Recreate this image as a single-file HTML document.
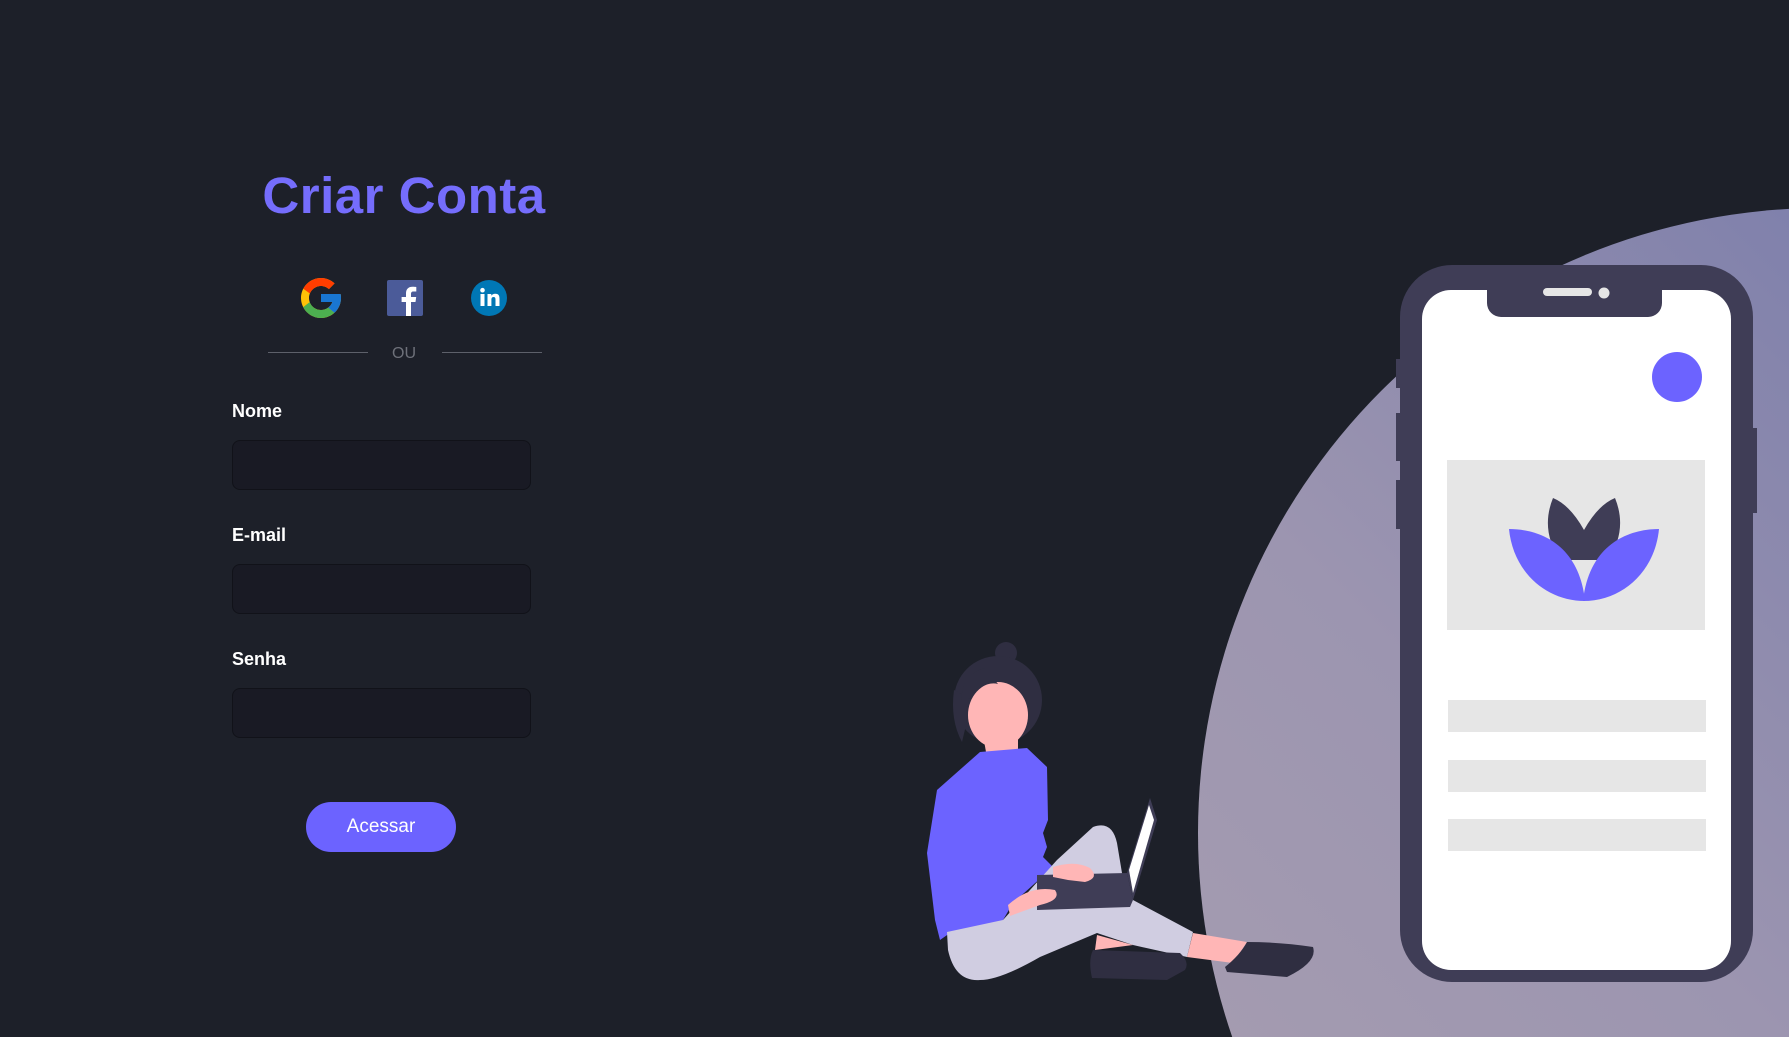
<!DOCTYPE html>
<html><head><meta charset="utf-8"><style>
*{margin:0;padding:0;box-sizing:border-box}
html,body{width:1789px;height:1037px;overflow:hidden}
body{background:#1d2029;position:relative;font-family:"Liberation Sans",sans-serif}
.abs{position:absolute}
h1{position:absolute;left:258px;top:166px;width:292px;text-align:center;font-size:51px;font-weight:bold;color:#756dfc;letter-spacing:0.5px;line-height:60px}
.lbl{position:absolute;left:232px;font-size:18px;font-weight:bold;color:#fff}
.inp{position:absolute;left:232px;width:299px;height:50px;background:#191a24;border:1px solid #111219;border-radius:8px}
.btn{position:absolute;left:306px;top:802px;width:150px;height:50px;border-radius:25px;background:#6c63ff;color:#fff;font-size:19px;text-align:center;line-height:50px}
.line{position:absolute;top:352px;height:1px;background:#5d606a;width:100px}
</style></head><body>
<h1>Criar Conta</h1>
<svg class="abs" style="left:301px;top:278px" width="40" height="40" viewBox="4 4 40 40">
<path fill="#FFC107" d="M43.6 20H24v8h11.3C33.7 32.7 29.2 36 24 36c-6.6 0-12-5.4-12-12s5.4-12 12-12c3.1 0 5.8 1.2 7.9 3.1l5.7-5.7C34 6.1 29.3 4 24 4 13 4 4 13 4 24s9 20 20 20 20-9 20-20c0-1.3-.1-2.7-.4-4z"/>
<path fill="#FF3D00" d="M6.3 14.7l6.6 4.8C14.7 15.1 19 12 24 12c3.1 0 5.8 1.2 7.9 3.1l5.7-5.7C34 6.1 29.3 4 24 4 16.3 4 9.7 8.3 6.3 14.7z"/>
<path fill="#4CAF50" d="M24 44c5.2 0 9.9-2 13.4-5.2l-6.2-5.2C29.2 35.1 26.7 36 24 36c-5.2 0-9.6-3.3-11.3-7.9l-6.5 5C9.5 39.6 16.2 44 24 44z"/>
<path fill="#1976D2" d="M43.6 20H24v8h11.3c-.8 2.2-2.2 4.2-4.1 5.6l6.2 5.2C37 39.2 44 34 44 24c0-1.3-.1-2.7-.4-4z"/>
</svg>
<svg class="abs" style="left:387px;top:280px" width="36" height="36" viewBox="0 0 36 36">
<rect width="36" height="36" rx="2" fill="#4b5b99"/>
<path d="M24 36V22h4.5l.7-5H24v-3c0-1.5.5-2.5 2.6-2.5h2.7V7c-.5-.1-2-.2-3.9-.2-3.9 0-6.4 2.300-6.4 6.6V17h-4.4v5H19v14z" fill="#fff"/>
</svg>
<svg class="abs" style="left:471px;top:280px" width="36" height="36" viewBox="0 0 36 36">
<circle cx="18" cy="18" r="18" fill="#0077b5"/>
<rect x="9.5" y="14" width="4" height="12" fill="#fff"/><circle cx="11.5" cy="10.2" r="2.3" fill="#fff"/>
<path d="M16.5 14h3.8v1.8c.6-1.1 2-2.1 4-2.1 3.6 0 4.2 2.3 4.2 5.3V26h-4v-6c0-1.5-.1-3-1.900-3-1.900 0-2.200 1.400-2.200 2.900V26h-3.900z" fill="#fff"/>
</svg>
<div class="line" style="left:268px"></div><div class="line" style="left:442px"></div>
<div class="abs" style="left:392px;top:345px;font-size:16px;color:#6e717a">OU</div>
<div class="lbl" style="top:401px">Nome</div><div class="inp" style="top:440px"></div>
<div class="lbl" style="top:525px">E-mail</div><div class="inp" style="top:564px"></div>
<div class="lbl" style="top:649px">Senha</div><div class="inp" style="top:688px"></div>
<div class="btn">Acessar</div>
<svg class="abs" style="left:0;top:0" width="1789" height="1037" viewBox="0 0 1789 1037">
<defs><linearGradient id="g" x1="1" y1="0" x2="0" y2="1"><stop offset="0" stop-color="#6a71a8"/><stop offset="0.6" stop-color="#9c95b0"/><stop offset="1" stop-color="#aaa0b0"/></linearGradient></defs>
<circle cx="1823" cy="833" r="625" fill="url(#g)"/>
<rect x="1396" y="359" width="6" height="29" fill="#3f3d56"/>
<rect x="1396" y="413" width="6" height="48" fill="#3f3d56"/>
<rect x="1396" y="480" width="6" height="49" fill="#3f3d56"/>
<rect x="1751" y="428" width="6" height="85" fill="#3f3d56"/>
<rect x="1400" y="265" width="353" height="717" rx="52" fill="#3f3d56"/>
<rect x="1422" y="290" width="309" height="680" rx="29" fill="#fff"/>
<path d="M1487 290h175v13a14 14 0 0 1-14 14h-147a14 14 0 0 1-14-14z" fill="#3f3d56"/>
<rect x="1543" y="288" width="49" height="8" rx="4" fill="#e6e6e6"/>
<circle cx="1604" cy="293" r="5.5" fill="#e6e6e6"/>
<circle cx="1677" cy="377" r="25" fill="#6c63ff"/>
<rect x="1447" y="460" width="258" height="170" fill="#e6e6e6"/>
<path d="M1584 530 Q1570 505 1553 498 Q1540 530 1560 560 L1608 560 Q1628 530 1615 498 Q1598 505 1584 530z" fill="#3f3d56"/>
<path d="M1509 529c30 0 70 15 76 72-40 0-72-30-76-72z" fill="#6c63ff"/>
<path d="M1659 529c-30 0-70 15-76 72 40 0 72-30 76-72z" fill="#6c63ff"/>
<rect x="1448" y="700" width="258" height="32" fill="#e6e6e6"/>
<rect x="1448" y="760" width="258" height="32" fill="#e6e6e6"/>
<rect x="1448" y="819" width="258" height="32" fill="#e6e6e6"/>
<circle cx="1006" cy="653" r="11" fill="#2f2e41"/>
<circle cx="998" cy="700" r="44" fill="#2f2e41"/>
<path d="M954 690 Q950 720 962 742 L972 700z" fill="#2f2e41"/>
<path d="M983 735 L986 752 L1018 752 L1018 735z" fill="#ffb6b6"/>
<ellipse cx="998" cy="715" rx="30" ry="33" fill="#ffb6b6"/>
<path d="M965 700 Q985 680 998 684 L985 668 Q960 675 962 700z" fill="#2f2e41"/>
<path d="M937 790 L980 752 L1027 748 L1047 767 L1048 820 L1043 833 L1047 847 L1043 857 L1053 867 L1013 903 L1003 920 L990 933 L950 933 L940 940 L935 920 L927 853z" fill="#6c63ff"/>
<path d="M947 932 L1003 920 L1057 860 L1093 827 Q1112 820 1117 843 L1122 873 L1133 900 L1193 932 L1187 957 L1133 945 L1097 933 L1040 957 Q1000 980 980 980 Q955 982 948 950z" fill="#d0cde1"/>
<path d="M1193 933 L1247 942 L1233 963 L1187 957z" fill="#ffb6b6"/>
<path d="M1247 942 Q1280 942 1313 947 Q1318 962 1287 977 L1227 972 L1225 967 Q1240 955 1247 942z" fill="#2f2e41"/>
<path d="M1097 935 L1133 945 L1095 950z" fill="#ffb6b6"/>
<path d="M1093 950 L1180 953 Q1190 962 1185 970 L1167 980 L1092 978 Q1088 960 1093 950z" fill="#2f2e41"/>
<path d="M1037 875 L1127 873 L1133 900 L1130 907 L1037 910z" fill="#3f3d56"/>
<path d="M1127 873 L1150 798 L1157 820 L1133 900z" fill="#3f3d56"/>
<path d="M1129 870 L1149 805 L1154 820 L1133 893z" fill="#fff"/>
<path d="M1053 867 Q1075 860 1090 868 Q1100 878 1085 882 L1068 880 L1053 877z" fill="#ffb6b6"/>
<path d="M1008 905 Q1030 885 1055 890 Q1062 900 1040 905 L1010 916z" fill="#ffb6b6"/>
</svg>
</body></html>
